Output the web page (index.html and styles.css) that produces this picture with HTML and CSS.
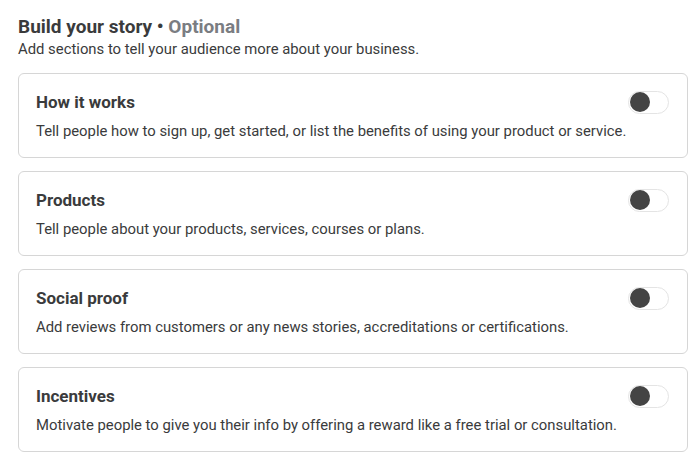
FILE: index.html
```html
<!DOCTYPE html>
<html>
<head>
<meta charset="utf-8">
<link rel="stylesheet" href="styles.css">
</head>
<body>
<div class="page">
  <h1 class="title">Build your story • <span class="opt">Optional</span></h1>
  <p class="subtitle">Add sections to tell your audience more about your business.</p>
  <div class="cards">
    <div class="card">
      <div class="card-head">
        <h2 class="card-title">How it works</h2>
        <span class="toggle"><span class="knob"></span></span>
      </div>
      <p class="card-desc">Tell people how to sign up, get started, or list the benefits of using your product or service.</p>
    </div>
    <div class="card">
      <div class="card-head">
        <h2 class="card-title">Products</h2>
        <span class="toggle"><span class="knob"></span></span>
      </div>
      <p class="card-desc">Tell people about your products, services, courses or plans.</p>
    </div>
    <div class="card">
      <div class="card-head">
        <h2 class="card-title">Social proof</h2>
        <span class="toggle"><span class="knob"></span></span>
      </div>
      <p class="card-desc">Add reviews from customers or any news stories, accreditations or certifications.</p>
    </div>
    <div class="card">
      <div class="card-head">
        <h2 class="card-title">Incentives</h2>
        <span class="toggle"><span class="knob"></span></span>
      </div>
      <p class="card-desc">Motivate people to give you their info by offering a reward like a free trial or consultation.</p>
    </div>
  </div>
</div>
</body>
</html>
```
FILE: styles.css
```css
* { box-sizing: border-box; }
html, body { margin: 0; padding: 0; background: #fff; }
body { font-family: Roboto, "Liberation Sans", sans-serif; color: #1c1e21; }
.page { padding: 15px 12px 0 18px; }
.title { margin: 0; font-size: 19px; line-height: 24px; font-weight: 700; color: #3a3b3c; }
.opt { color: #7a7d82; }
.subtitle { margin: 0; font-size: 14.85px; line-height: 20px; color: #3a3b3c; }
.cards { margin-top: 14px; display: flex; flex-direction: column; gap: 13px; }
.card { border: 1px solid #d6d6d6; border-radius: 6px; height: 85px; padding: 17px 18px 0 17px; }
.card-head { display: flex; justify-content: space-between; align-items: center; height: 22px; }
.card-title { margin: 0; font-size: 17px; line-height: 22px; font-weight: 700; color: #3a3b3c; }
.card-desc { margin: 8px 0 0; font-size: 14.85px; line-height: 20px; color: #3a3b3c; }
.toggle { width: 41px; height: 23px; border: 1px solid #e4e4e4; border-radius: 12px; display: flex; align-items: center; padding-left: 1px; }
.knob { width: 20px; height: 20px; border-radius: 50%; background: #444; }
```
